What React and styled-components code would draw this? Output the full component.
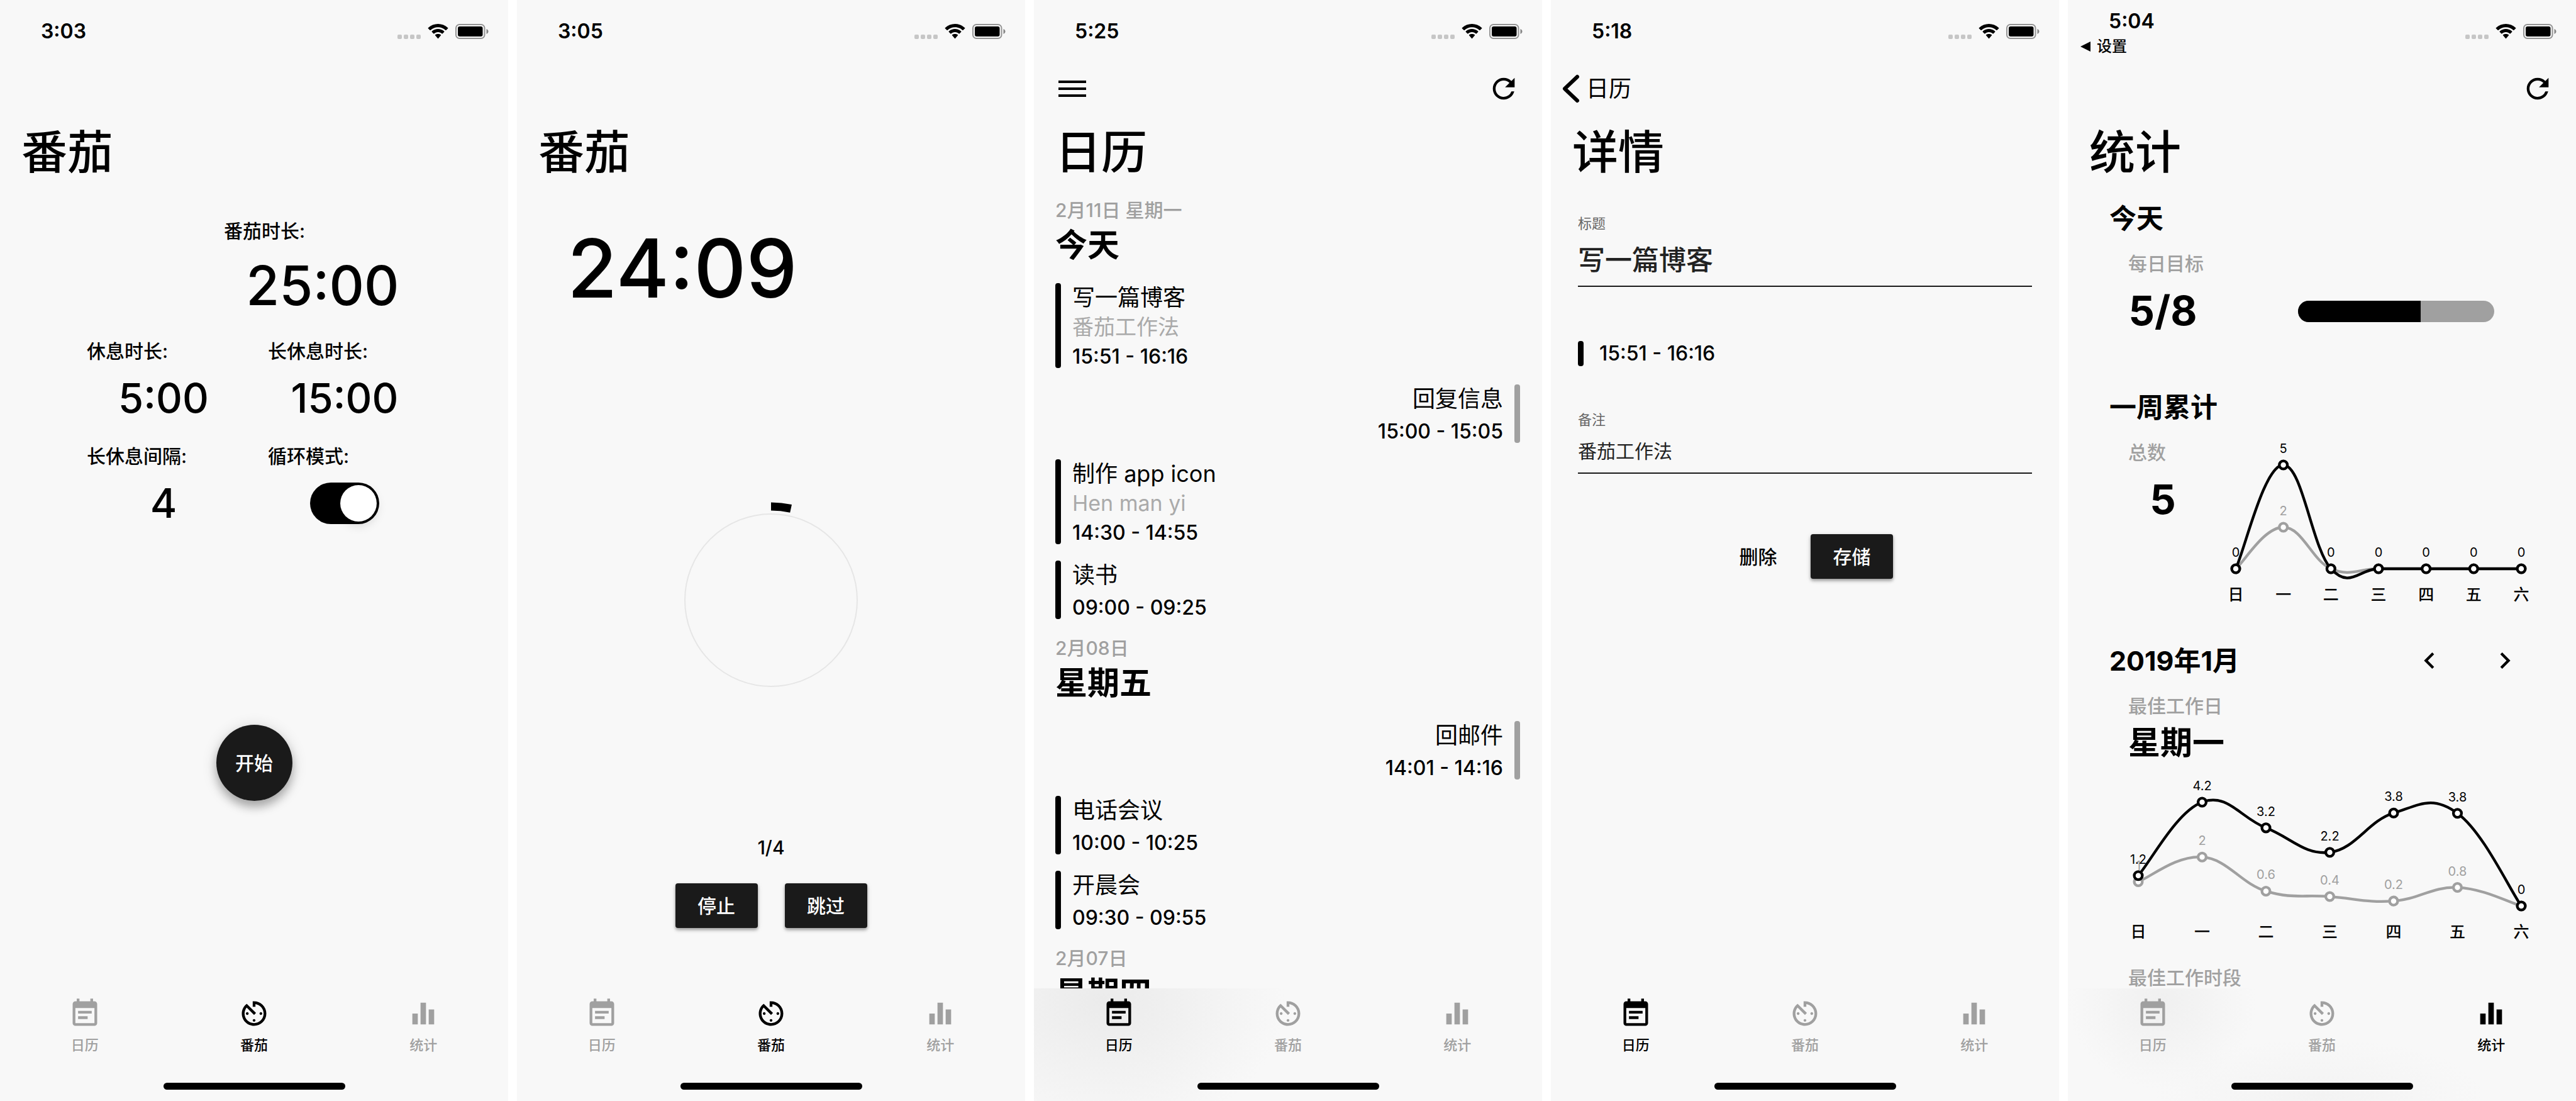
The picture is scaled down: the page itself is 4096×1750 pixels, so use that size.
import React, { useState } from "react";
import styled, { createGlobalStyle, css } from "styled-components";
import {
  MdEventNote,
  MdAvTimer,
  MdEqualizer,
  MdRefresh,
  MdChevronLeft,
  MdChevronRight,
} from "react-icons/md";

const ink = "#000";
const dark = "#1a1a1a";
const muted = "#a0a0a0";
const paper = "#f8f8f8";

const GlobalStyle = createGlobalStyle`
  *, *::before, *::after { box-sizing: border-box; }
  body {
    margin: 0;
    background: #fff;
    color: ${ink};
    font-family: Inter, "Noto Sans CJK SC", sans-serif;
    font-size: 30px;
    line-height: 36px;
    font-weight: 500;
  }
  h1, h2, h3, p { margin: 0; }
  ul { margin: 0; padding: 0; list-style: none; }
  a { color: inherit; text-decoration: none; }
  button, input { font: inherit; color: inherit; }
`;

const Gallery = styled.div`
  display: grid;
  grid-template-columns: repeat(5, minmax(0, 1fr));
  gap: 14px;
  height: 100vh;
`;

const Phone = styled.section`
  display: flex;
  flex-direction: column;
  min-width: 0;
  min-height: 0;
  background: ${paper};
`;

/* ---------- status bar ---------- */

const StatusRow = styled.div`
  display: flex;
  justify-content: space-between;
  align-items: flex-start;
  flex: none;
  height: 95px;
  padding: 0 31px 0 20px;
`;

const StatusLeft = styled.div`
  padding-top: ${(p) => (p.$withReturn ? 14 : 30)}px;
`;

const Clock = styled.div`
  padding-left: 45px;
  font-size: 32px;
  line-height: 40px;
  font-weight: 600;
`;

const ReturnLink = styled.a`
  display: flex;
  align-items: center;
  gap: 10px;
  font-size: 24px;
  line-height: 40px;
`;

const StatusIcons = styled.div`
  display: flex;
  align-items: flex-end;
  gap: 11px;
  padding-top: 38px;
  svg { display: block; }
`;

const Dots = styled.div`
  display: flex;
  gap: 3px;
  i {
    width: 7px;
    height: 7px;
    border-radius: 2px;
    background: #c6c6c6;
  }
`;

function StatusBar({ time, returnTo }) {
  return (
    <StatusRow>
      <StatusLeft $withReturn={Boolean(returnTo)}>
        <Clock>{time}</Clock>
        {returnTo && (
          <ReturnLink href="#settings">
            <svg width="16" height="16" viewBox="0 0 16 16" aria-hidden="true">
              <path d="M0 8 16 0v16z" />
            </svg>
            {returnTo}
          </ReturnLink>
        )}
      </StatusLeft>
      <StatusIcons>
        <Dots><i /><i /><i /><i /></Dots>
        <svg width="33" height="24" viewBox="0 0 33 24" aria-hidden="true">
          <path d="M16.5 5.2c4.5 0 8.700 1.700 11.900 4.800.3.2.6.2.900 0l2.900-2.700c.3-.3.3-.7 0-1C23.500-2 9.500-2 .8 6.300c-.3.300-.3.700 0 1l2.900 2.700c.2.200.6.200.900 0C7.800 6.900 12 5.200 16.500 5.200z" />
          <path d="M16.500 13.100c2.400 0 4.500.9 6.200 2.400.3.200.6.200.9 0l2.700-2.700c.3-.3.300-.7 0-1-5.600-5-14-5-19.600 0-.3.300-.3.700 0 1l2.700 2.700c.3.200.6.200.9 0 1.700-1.500 3.800-2.400 6.200-2.400z" />
          <path d="M21 18.300c.3-.3.300-.7 0-1-2.600-1.900-6.400-1.900-9 0-.3.300-.3.700 0 1l4 4.700c.3.300.7.300 1 0z" />
        </svg>
        <svg width="53" height="24" viewBox="0 0 53 24" aria-hidden="true">
          <rect x="1" y="1" width="45.500" height="22" rx="5.500" fill="none" stroke="#949494" strokeWidth="2" />
          <rect x="4" y="4" width="39.500" height="16" rx="3" />
          <path d="M49.500 8c4 1.500 4 6.500 0 8z" fill="#858585" />
        </svg>
      </StatusIcons>
    </StatusRow>
  );
}

/* ---------- header ---------- */

const NavBar = styled.div`
  display: flex;
  align-items: center;
  justify-content: space-between;
  flex: none;
  height: 95px;
  padding: 0 35px 3px;
`;

const IconButton = styled.button`
  display: flex;
  align-items: center;
  justify-content: center;
  width: 52px;
  height: 52px;
  padding: 0;
  border: 0;
  background: none;
  svg { display: block; flex: none; }
`;

const BackLink = styled.a`
  display: flex;
  align-items: center;
  gap: 10px;
  margin-left: -18px;
  font-size: 36px;
  line-height: 52px;
  font-weight: 400;
`;

const Title = styled.h1`
  flex: none;
  height: 112px;
  padding: 0 34px;
  font-size: 73px;
  line-height: 104px;
  font-weight: 500;
`;

const Main = styled.main`
  display: flex;
  flex-direction: column;
  flex: 1;
  min-height: 0;
  overflow: hidden;
`;

/* ---------- tab bar ---------- */

const Tabs = styled.nav`
  display: flex;
  flex-direction: column;
  justify-content: space-between;
  align-items: center;
  flex: none;
  height: 179px;
  padding: 14px 0 18px;
  background: ${(p) => p.$haze || "none"};
`;

const TabList = styled.ul`
  display: grid;
  grid-template-columns: repeat(3, 1fr);
  width: 100%;
`;

const Tab = styled.a`
  display: flex;
  flex-direction: column;
  align-items: center;
  gap: 8px;
  color: ${(p) => (p.$active ? ink : muted)};
  font-size: 22px;
  line-height: 32px;
  svg { display: block; }
`;

const HomeIndicator = styled.div`
  width: 289px;
  height: 11px;
  border-radius: 6px;
  background: ${ink};
`;

const tabItems = [
  { id: "calendar", label: "日历", Icon: MdEventNote },
  { id: "tomato", label: "番茄", Icon: MdAvTimer },
  { id: "stats", label: "统计", Icon: MdEqualizer },
];

function TabBar({ active, haze }) {
  return (
    <Tabs $haze={haze}>
      <TabList>
        {tabItems.map(({ id, label, Icon }) => (
          <li key={id}>
            <Tab href={"#" + id} $active={id === active}>
              <Icon size={52} />
              {label}
            </Tab>
          </li>
        ))}
      </TabList>
      <HomeIndicator />
    </Tabs>
  );
}

function Refresh() {
  return (
    <IconButton type="button" aria-label="刷新">
      <MdRefresh size={52} />
    </IconButton>
  );
}

/* ---------- buttons ---------- */

const Button = styled.button`
  width: 131px;
  height: 71px;
  padding: 0;
  border: 0;
  border-radius: 4px;
  font-size: 30px;
  font-weight: 500;
  ${(p) =>
    p.$flat
      ? css`
          background: none;
          color: ${ink};
        `
      : css`
          background: ${dark};
          color: #fff;
          box-shadow: 0 2px 4px rgba(0, 0, 0, 0.2), 0 4px 5px rgba(0, 0, 0, 0.16), 0 2px 10px rgba(0, 0, 0, 0.1);
        `}
`;

const RoundButton = styled(Button)`
  width: 121px;
  height: 121px;
  border-radius: 50%;
  box-shadow: 0 10px 14px rgba(0, 0, 0, 0.24), 0 4px 24px rgba(0, 0, 0, 0.16);
`;

const ButtonRow = styled.div`
  display: flex;
  justify-content: center;
  gap: ${(p) => p.$gap}px;
  margin-top: ${(p) => p.$top}px;
`;

/* ---------- timer settings ---------- */

const Settings = styled.div`
  display: grid;
  grid-template-columns: 244px 244px;
  justify-content: center;
  gap: 35px 44px;
  padding-top: 47px;
`;

const Setting = styled.div`
  display: flex;
  flex-direction: column;
  gap: 18px;
  ${(p) =>
    p.$lead &&
    css`
      grid-column: 1 / -1;
      justify-self: end;
      width: 314px;
    `}
`;

const SettingValue = styled.output`
  text-align: center;
  font-size: ${(p) => (p.$lead ? 86 : 65)}px;
  line-height: ${(p) => (p.$lead ? 102 : 78)}px;
`;

const SwitchCell = styled.div`
  display: flex;
  align-items: center;
  justify-content: center;
  height: 78px;
`;

const Switch = styled.input`
  appearance: none;
  display: flex;
  align-items: center;
  width: 110px;
  height: 66px;
  margin: 0;
  padding: 0 4px;
  border-radius: 33px;
  background: #ccc;
  &::before {
    content: "";
    width: 58px;
    height: 58px;
    border-radius: 50%;
    background: #fff;
    box-shadow: 0 6px 16px rgba(0, 0, 0, 0.15);
  }
  &:checked {
    justify-content: flex-end;
    background: ${ink};
  }
`;

const StartArea = styled.div`
  display: flex;
  justify-content: center;
  margin-top: auto;
  padding-bottom: 298px;
`;

function SetupScreen() {
  const [loop, setLoop] = useState(true);
  return (
    <Phone>
      <StatusBar time="3:03" />
      <NavBar />
      <Title>番茄</Title>
      <Main>
        <Settings>
          <Setting $lead>
            <label htmlFor="work">番茄时长:</label>
            <SettingValue id="work" $lead>25:00</SettingValue>
          </Setting>
          <Setting>
            <label htmlFor="rest">休息时长:</label>
            <SettingValue id="rest">5:00</SettingValue>
          </Setting>
          <Setting>
            <label htmlFor="long">长休息时长:</label>
            <SettingValue id="long">15:00</SettingValue>
          </Setting>
          <Setting>
            <label htmlFor="every">长休息间隔:</label>
            <SettingValue id="every">4</SettingValue>
          </Setting>
          <Setting>
            <label htmlFor="loop">循环模式:</label>
            <SwitchCell>
              <Switch
                id="loop"
                type="checkbox"
                checked={loop}
                onChange={(e) => setLoop(e.target.checked)}
              />
            </SwitchCell>
          </Setting>
        </Settings>
        <StartArea>
          <RoundButton type="button">开始</RoundButton>
        </StartArea>
      </Main>
      <TabBar active="tomato" />
    </Phone>
  );
}

/* ---------- running timer ---------- */

const Remaining = styled.div`
  padding: 49px 80px 0;
  font-size: 129px;
  line-height: 150px;
`;

const Ring = styled.svg`
  display: block;
  width: 312px;
  height: 312px;
  margin: 297px auto 217px;
`;

const Round = styled.p`
  text-align: center;
  line-height: 40px;
`;

function TimerScreen() {
  const angle = (51 / 1500) * 2 * Math.PI;
  const x = 156 + 149 * Math.sin(angle);
  const y = 156 - 149 * Math.cos(angle);
  return (
    <Phone>
      <StatusBar time="3:05" />
      <NavBar />
      <Title>番茄</Title>
      <Main>
        <Remaining>24:09</Remaining>
        <Ring viewBox="0 0 312 312" aria-hidden="true">
          <circle cx="156" cy="156" r="137" fill="none" stroke="#e6e6e6" strokeWidth="2" />
          <path d={`M156 7A149 149 0 0 1 ${x} ${y}`} fill="none" stroke={ink} strokeWidth="13" />
        </Ring>
        <Round>1/4</Round>
        <ButtonRow $gap={43} $top={37}>
          <Button type="button">停止</Button>
          <Button type="button">跳过</Button>
        </ButtonRow>
      </Main>
      <TabBar active="tomato" />
    </Phone>
  );
}

/* ---------- calendar ---------- */

const Days = styled.div`
  display: flex;
  flex-direction: column;
  gap: 28px;
  padding: 14px 35px 0 34px;
`;

const DateText = styled.p`
  color: ${muted};
`;

const DayName = styled.h2`
  margin: 8px 0 30px;
  font-size: 51px;
  line-height: 60px;
  font-weight: 700;
`;

const Events = styled.ul`
  display: flex;
  flex-direction: column;
  gap: 26px;
`;

const EventRow = styled.li`
  display: flex;
  flex-direction: ${(p) => (p.$rest ? "row-reverse" : "row")};
  gap: 18px;
  text-align: ${(p) => (p.$rest ? "right" : "left")};
`;

const Bar = styled.span`
  flex: none;
  width: 9px;
  border-radius: 4px;
  background: ${(p) => (p.$rest ? muted : ink)};
`;

const EventTitle = styled.h3`
  font-size: 36px;
  line-height: 46px;
  font-weight: 400;
`;

const EventNote = styled.p`
  color: #aaa;
  font-size: 34px;
  line-height: 48px;
  font-weight: 400;
`;

const TimeText = styled.p`
  font-size: 32px;
  line-height: ${(p) => (p.$tall ? 40 : 36)}px;
`;

const EventTime = styled(TimeText)`
  margin-top: 11px;
  ${EventNote} + & { margin-top: 5px; }
`;

const days = [
  {
    date: "2月11日 星期一",
    name: "今天",
    events: [
      { title: "写一篇博客", note: "番茄工作法", time: "15:51 - 16:16" },
      { title: "回复信息", time: "15:00 - 15:05", rest: true },
      { title: "制作 app icon", note: "Hen man yi", time: "14:30 - 14:55" },
      { title: "读书", time: "09:00 - 09:25" },
    ],
  },
  {
    date: "2月08日",
    name: "星期五",
    events: [
      { title: "回邮件", time: "14:01 - 14:16", rest: true },
      { title: "电话会议", time: "10:00 - 10:25" },
      { title: "开晨会", time: "09:30 - 09:55" },
    ],
  },
  { date: "2月07日", name: "星期四", events: [] },
];

function CalendarScreen() {
  return (
    <Phone>
      <StatusBar time="5:25" />
      <NavBar>
        <IconButton type="button" aria-label="菜单">
          <svg width="44" height="26" viewBox="0 0 44 26" aria-hidden="true">
            <path d="M0 0h44v4H0zM0 11h44v4H0zM0 22h44v4H0z" />
          </svg>
        </IconButton>
        <Refresh />
      </NavBar>
      <Title>日历</Title>
      <Main>
        <Days>
          {days.map((day) => (
            <section key={day.date}>
              <DateText>{day.date}</DateText>
              <DayName>{day.name}</DayName>
              <Events>
                {day.events.map((e) => (
                  <EventRow key={e.time} $rest={e.rest}>
                    <Bar $rest={e.rest} />
                    <div>
                      <EventTitle>{e.title}</EventTitle>
                      {e.note && <EventNote>{e.note}</EventNote>}
                      <EventTime>{e.time}</EventTime>
                    </div>
                  </EventRow>
                ))}
              </Events>
            </section>
          ))}
        </Days>
      </Main>
      <TabBar
        active="calendar"
        haze="radial-gradient(ellipse 290px 220px at 110px 20px, #ebebeb, rgba(248, 248, 248, 0))"
      />
    </Phone>
  );
}

/* ---------- event detail ---------- */

const Form = styled.form`
  display: flex;
  flex-direction: column;
  padding: 38px 43px 0;
`;

const FieldLabel = styled.label`
  color: #666;
  font-size: 22px;
  line-height: 30px;
  font-weight: 400;
`;

const TextField = styled.input`
  width: 100%;
  height: ${(p) => (p.$large ? 86 : 71)}px;
  padding: 0 0 4px;
  border: 0;
  border-bottom: 2px solid ${dark};
  background: none;
  color: #222;
  outline: none;
  font-size: ${(p) => (p.$large ? 43 : 30)}px;
  font-weight: ${(p) => (p.$large ? 500 : 400)};
`;

const TimeRange = styled.div`
  display: flex;
  gap: 25px;
  margin: 86px 0 70px;
`;

function DetailScreen() {
  return (
    <Phone>
      <StatusBar time="5:18" />
      <NavBar>
        <BackLink href="#calendar">
          <svg width="29" height="46" viewBox="0 0 29 46" fill="none" stroke={ink} strokeWidth="6" strokeLinecap="round" strokeLinejoin="round" aria-hidden="true">
            <path d="M25 4 5 23l20 19" />
          </svg>
          日历
        </BackLink>
      </NavBar>
      <Title>详情</Title>
      <Main>
        <Form>
          <FieldLabel htmlFor="title">标题</FieldLabel>
          <TextField id="title" type="text" $large defaultValue="写一篇博客" />
          <TimeRange>
            <Bar />
            <TimeText $tall>15:51 - 16:16</TimeText>
          </TimeRange>
          <FieldLabel htmlFor="note">备注</FieldLabel>
          <TextField id="note" type="text" defaultValue="番茄工作法" />
          <ButtonRow $gap={18} $top={96}>
            <Button type="button" $flat>删除</Button>
            <Button type="button">存储</Button>
          </ButtonRow>
        </Form>
      </Main>
      <TabBar active="calendar" />
    </Phone>
  );
}

/* ---------- statistics ---------- */

const Report = styled.div`
  display: flex;
  flex-direction: column;
  gap: 59px;
  padding: 19px 60px 0 66px;
`;

const SectionHead = styled.div`
  display: flex;
  align-items: center;
  justify-content: space-between;
  height: 52px;
  margin-bottom: 28px;
  padding-right: 27px;
`;

const SectionTitle = styled.h2`
  font-size: 43px;
  line-height: 52px;
  font-weight: 700;
`;

const MonthButtons = styled.div`
  display: flex;
  gap: 68px;
`;

const StatRow = styled.div`
  display: flex;
  align-items: flex-start;
  padding-left: 30px;
`;

const Stat = styled.div`
  flex: none;
  width: 110px;
  padding-bottom: 30px;
`;

const StatLabel = styled.p`
  color: ${muted};
  white-space: nowrap;
`;

const StatValue = styled.p`
  margin-top: 19px;
  text-align: center;
  font-size: 65px;
  line-height: 76px;
  font-weight: 700;
`;

const Goal = styled.progress`
  appearance: none;
  flex: 1;
  min-width: 0;
  height: 34px;
  margin: 77px 70px 0 160px;
  border: 0;
  border-radius: 17px;
  overflow: hidden;
  &::-webkit-progress-bar { background: ${muted}; }
  &::-webkit-progress-value { background: ${ink}; }
`;

const BestDay = styled.p`
  margin: 3px 0 18px 30px;
  font-size: 51px;
  line-height: 76px;
  font-weight: 700;
`;

const Inset = styled.div`
  padding-left: 30px;
`;

const WeekChart = styled.div`
  flex: 1;
  margin-left: 34px;
`;

const MonthChart = styled.div`
  margin: 0 0 35px 19px;
`;

const Plot = styled.svg`
  display: block;
  width: 100%;
  height: auto;
  text { text-anchor: middle; }
`;

const weekdays = ["日", "一", "二", "三", "四", "五", "六"];

function smoothPath(points) {
  const k = 0.2;
  return points.reduce((d, [x, y], i) => {
    if (i === 0) return `M${x} ${y}`;
    const a = points[i - 1];
    const before = points[i - 2] || a;
    const after = points[i + 1] || points[i];
    return (
      d +
      `C${a[0] + (x - before[0]) * k} ${a[1] + (y - before[1]) * k} ` +
      `${x - (after[0] - a[0]) * k} ${y - (after[1] - a[1]) * k} ${x} ${y}`
    );
  }, "");
}

function LineChart({ width, max, series }) {
  const xAt = (i) => 27 + ((width - 54) / 6) * i;
  const yAt = (v) => 203 - (v / max) * 165;
  return (
    <Plot viewBox={`0 0 ${width} 264`} role="img">
      {series.map(({ color, values }) => {
        const points = values.map((v, i) => [xAt(i), yAt(v)]);
        return (
          <g key={color}>
            <path d={smoothPath(points)} fill="none" stroke={color} strokeWidth="4.300" />
            {points.map(([x, y], i) => (
              <g key={i}>
                <circle cx={x} cy={y} r="6.400" fill="#fff" stroke={color} strokeWidth="4.300" />
                {(color === ink || values[i] > 0) && (
                  <text x={x} y={y - 19} fontSize="20" fontWeight="400" fill={color}>
                    {Number(values[i].toFixed(1))}
                  </text>
                )}
              </g>
            ))}
          </g>
        );
      })}
      {weekdays.map((d, i) => (
        <text key={d} x={xAt(i)} y="253" fontSize="25">{d}</text>
      ))}
    </Plot>
  );
}

function StatsScreen() {
  return (
    <Phone>
      <StatusBar time="5:04" returnTo="设置" />
      <NavBar>
        <span />
        <Refresh />
      </NavBar>
      <Title>统计</Title>
      <Main>
        <Report>
          <section>
            <SectionHead>
              <SectionTitle>今天</SectionTitle>
            </SectionHead>
            <StatRow>
              <Stat>
                <StatLabel as="label" htmlFor="goal">每日目标</StatLabel>
                <StatValue>5/8</StatValue>
              </Stat>
              <Goal id="goal" value="5" max="8" />
            </StatRow>
          </section>
          <section>
            <SectionHead>
              <SectionTitle>一周累计</SectionTitle>
            </SectionHead>
            <StatRow>
              <Stat>
                <StatLabel>总数</StatLabel>
                <StatValue>5</StatValue>
              </Stat>
              <WeekChart>
                <LineChart
                  width={508}
                  max={5}
                  series={[
                    { color: muted, values: [0, 2, 0, 0, 0, 0, 0] },
                    { color: ink, values: [0, 5, 0, 0, 0, 0, 0] },
                  ]}
                />
              </WeekChart>
            </StatRow>
          </section>
          <section>
            <SectionHead>
              <SectionTitle>2019年1月</SectionTitle>
              <MonthButtons>
                <IconButton type="button" aria-label="上个月">
                  <MdChevronLeft size={52} />
                </IconButton>
                <IconButton type="button" aria-label="下个月">
                  <MdChevronRight size={52} />
                </IconButton>
              </MonthButtons>
            </SectionHead>
            <Inset>
              <StatLabel>最佳工作日</StatLabel>
            </Inset>
            <BestDay>星期一</BestDay>
            <MonthChart>
              <LineChart
                width={663}
                max={4.2}
                series={[
                  { color: muted, values: [0.98, 1.98, 0.6, 0.38, 0.2, 0.75, 0] },
                  { color: ink, values: [1.23, 4.2, 3.16, 2.17, 3.76, 3.75, 0] },
                ]}
              />
            </MonthChart>
            <Inset>
              <StatLabel>最佳工作时段</StatLabel>
            </Inset>
          </section>
        </Report>
      </Main>
      <TabBar
        active="stats"
        haze="radial-gradient(ellipse 150px 140px at 150px 20px, #f0f0f0, rgba(248, 248, 248, 0)), radial-gradient(ellipse 260px 90px at 400px 170px, #f3f3f3, rgba(248, 248, 248, 0))"
      />
    </Phone>
  );
}

export default function App() {
  return (
    <>
      <GlobalStyle />
      <Gallery>
        <SetupScreen />
        <TimerScreen />
        <CalendarScreen />
        <DetailScreen />
        <StatsScreen />
      </Gallery>
    </>
  );
}
